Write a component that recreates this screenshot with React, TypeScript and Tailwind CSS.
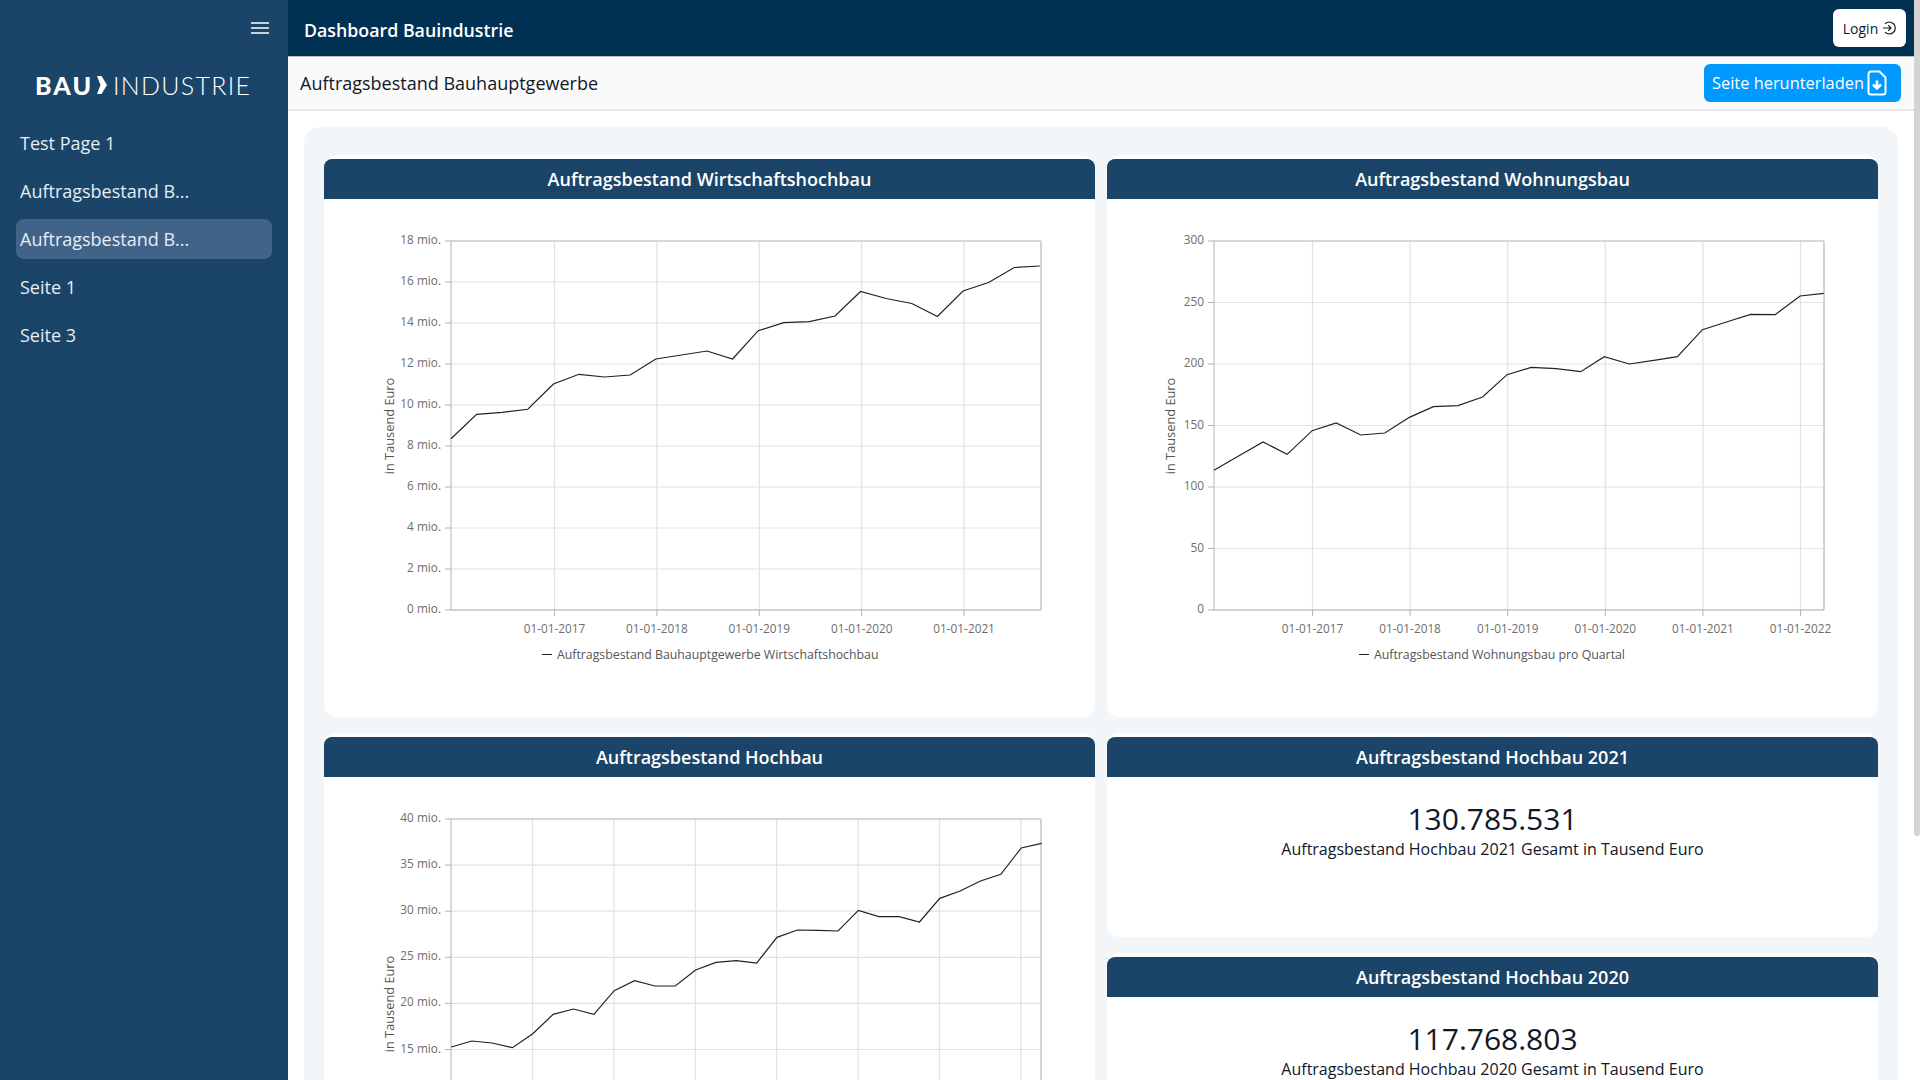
const font = "font-['Open_Sans',sans-serif]";

const chartOne = [
  438.7, 414.3, 412.3, 409.3, 384, 374.3, 377, 375, 359, 355, 351, 359, 330.7, 322.7, 321.7, 316, 291.5, 298.5, 303.5, 316.5, 291, 282.5, 267.5, 266,
];
const chartTwoX = [
  178, 230, 282, 333, 386, 437, 489, 540, 592, 643, 695, 747, 799, 850, 903, 955, 1005, 1058, 1110, 1160, 1213, 1264, 1315, 1367, 1420, 1470,
];
const chartTwoY = [
  781, 738, 696, 733, 662, 639, 675, 669, 622, 590, 587, 561, 494, 472, 476, 485, 440, 462, 451, 440, 359, 336, 313, 314, 258, 250,
];
const chartThree = [
  951, 933, 939, 953, 911, 853, 837, 853, 782, 752, 768, 768, 720, 697, 692, 699, 622, 600, 601, 603, 541, 560, 560, 576, 505, 483, 453, 433, 354, 340,
];

type Tick = { label: string; at: number };

type ChartProps = {
  viewBox: string;
  left: number;
  right: number;
  top: number;
  bottom: number;
  yTicks: Tick[];
  xTicks: Tick[];
  points: string;
  axisX: number;
  axisY: number;
  legend?: string;
  legendX?: number;
  showLabels?: boolean;
};

function LineChart({ viewBox, left, right, top, bottom, yTicks, xTicks, points, axisX, axisY, legend, legendX, showLabels }: ChartProps) {
  return (
    <svg viewBox={viewBox} className={`block w-full h-full ${font}`}>
      {yTicks.map((t) => (
        <g key={t.label}>
          <line x1={left} x2={right} y1={t.at} y2={t.at} stroke="#e2e2e2" strokeWidth="1.2" />
          <line x1={left - 6} x2={left} y1={t.at} y2={t.at} stroke="#b3b3b3" />
          <text x={left - 10} y={t.at + 3} textAnchor="end" fontSize="11.8" fill="#6e6e6e">
            {t.label}
          </text>
        </g>
      ))}
      {xTicks.map((t) => (
        <g key={t.at}>
          <line x1={t.at} x2={t.at} y1={top} y2={bottom} stroke="#e2e2e2" strokeWidth="1.2" />
          <line x1={t.at} x2={t.at} y1={bottom} y2={bottom + 6} stroke="#b3b3b3" />
          {showLabels && (
            <text x={t.at} y={bottom + 23} textAnchor="middle" fontSize="11.8" fill="#6e6e6e">
              {t.label}
            </text>
          )}
        </g>
      ))}
      <line x1={left} x2={right} y1={top} y2={top} stroke="#c0c0c0" />
      <line x1={right} x2={right} y1={top} y2={bottom} stroke="#d4d4d4" strokeWidth="2" />
      <line x1={left} x2={left} y1={top} y2={bottom} stroke="#b3b3b3" />
      <line x1={left} x2={right} y1={bottom} y2={bottom} stroke="#b3b3b3" />
      <polyline points={points} fill="none" stroke="#222222" strokeWidth="1.2" />
      <text
        x={axisX}
        y={axisY}
        transform={`rotate(-90 ${axisX} ${axisY})`}
        textAnchor="middle"
        fontSize="12.8"
        fill="#555555"
      >
        in Tausend Euro
      </text>
      {legend && (
        <g>
          <line x1={legendX} x2={(legendX ?? 0) + 10} y1={654.5} y2={654.5} stroke="#222222" />
          <text x={(legendX ?? 0) + 15} y={659} fontSize="12.3" fill="#555555">
            {legend}
          </text>
        </g>
      )}
    </svg>
  );
}

function Card({ title, className, children }: { title: string; className: string; children: React.ReactNode }) {
  return (
    <section className={`bg-white rounded-xl pt-1 flex flex-col ${className}`}>
      <h2 className="h-10 shrink-0 rounded-t-lg bg-[#1a4568] text-white text-[18px] font-semibold flex items-center justify-center">
        {title}
      </h2>
      {children}
    </section>
  );
}

function KpiCard({ title, value, caption }: { title: string; value: string; caption: string }) {
  return (
    <Card title={title} className="h-[204px] shrink-0">
      <div className="pt-6 text-center text-[#111827]">
        <p className="text-[30px] leading-[36px]">{value}</p>
        <p className="text-[16px] leading-[22px] mt-[1px]">{caption}</p>
      </div>
    </Card>
  );
}

function NavItem({ label, active }: { label: string; active?: boolean }) {
  return (
    <a
      className={`h-10 mx-4 px-1 flex items-center rounded-lg text-[18px] text-[#e6edf3] ${active ? "bg-[#426388]" : ""}`}
    >
      {label}
    </a>
  );
}

function Logo() {
  return (
    <div className="h-[28px] flex items-center text-white font-['Lato',sans-serif] text-[25px] leading-none ml-[35px]">
      <span className="font-black tracking-[2px]">BAU</span>
      <svg width="10" height="18" viewBox="0 0 10 18" className="ml-[4px] mr-[6px]">
        <path d="M0 0H4.5L10 9L4.5 18H0L3.5 9Z" fill="white" />
      </svg>
      <span className="font-light tracking-[1.3px]">INDUSTRIE</span>
    </div>
  );
}

export default function App() {
  const xOne = chartOne.map((y, i) => `${451 + i * 25.6},${y}`).join(" ");
  const xTwo = chartTwoY.map((y, i) => `${1130 + chartTwoX[i] / 2.119},${210 + y / 3}`).join(" ");
  const xThree = chartThree.map((y, i) => `${451.4 + i * 20.35},${730 + y / 3}`).join(" ");

  return (
    <div className={`h-screen overflow-hidden flex bg-white text-[#111827] ${font}`}>
      <aside className="w-[288px] shrink-0 bg-[#1a4568] flex flex-col">
        <div className="h-14 flex items-center justify-end pr-[19px]">
          <svg width="18" height="12" viewBox="0 0 18 12" stroke="white" strokeWidth="1.4" className="mb-[1px]">
            <path d="M0 1H18M0 6H18M0 11H18" />
          </svg>
        </div>
        <div className="mt-[15px] mb-6">
          <Logo />
        </div>
        <nav className="flex flex-col gap-2">
          <NavItem label="Test Page 1" />
          <NavItem label="Auftragsbestand B..." />
          <NavItem label="Auftragsbestand B..." active />
          <NavItem label="Seite 1" />
          <NavItem label="Seite 3" />
        </nav>
      </aside>

      <div className="flex-1 min-w-0 relative pr-[6px]">
        <header className="h-[57px] bg-[#003153] border-b border-[#b8c0cc] flex items-center justify-between pl-4 pr-2">
          <h1 className="text-white text-[17.8px] font-semibold pt-1">Dashboard Bauindustrie</h1>
          <button className="h-[38px] w-[73px] rounded-md bg-white text-[14px] font-medium flex items-center justify-center gap-1" type="button">
            Login
            <svg width="14" height="14" viewBox="0 0 14 14" fill="none" stroke="#111827" strokeWidth="1.2">
              <path d="M3 2.8A6 6 0 1 1 3 11.2" />
              <path d="M1 7H9M6.2 4.2L9 7L6.2 9.8" />
            </svg>
          </button>
        </header>
        <div className="h-[54px] bg-[#fafafa] border-b-2 border-[#e5e5ea] flex items-center justify-between pl-3 pr-[13px]">
          <h2 className="text-[18px] text-[#111827] pt-[1px]">Auftragsbestand Bauhauptgewerbe</h2>
          <button className="h-[38px] w-[197px] rounded-md bg-[#0099ff] text-white text-[16.4px] font-medium flex items-center pl-2 gap-[3px]" type="button">
            Seite herunterladen
            <svg width="20" height="26" viewBox="0 0 20 26" fill="none" stroke="white" strokeWidth="2">
              <path d="M4 1.5H12.5L18.5 7.5V22A2.5 2.5 0 0 1 16 24.5H4A2.5 2.5 0 0 1 1.5 22V4A2.5 2.5 0 0 1 4 1.5Z" strokeLinejoin="round" />
              <path d="M10 10.5V18.5M6 14.5L10 18.5L14 14.5" strokeWidth="2.6" />
            </svg>
          </button>
        </div>

        <main className="mx-4 mt-[16px] rounded-2xl bg-[#f2f6f9] px-5 pt-7">
          <div className="grid grid-cols-[771px_771px] gap-x-3 gap-y-4 items-start">
            <Card title="Auftragsbestand Wirtschaftshochbau" className="h-[562px]">
              <div className="h-[518px]">
                <LineChart
                  viewBox="324 199 771 518"
                  left={451}
                  right={1041}
                  top={241}
                  bottom={610}
                  axisX={394}
                  axisY={426}
                  legend="Auftragsbestand Bauhauptgewerbe Wirtschaftshochbau"
                  legendX={542}
                  showLabels
                  points={xOne}
                  yTicks={["0", "2", "4", "6", "8", "10", "12", "14", "16", "18"].map((n, i) => ({
                    label: `${n} mio.`,
                    at: 610 - i * 41,
                  }))}
                  xTicks={["2017", "2018", "2019", "2020", "2021"].map((y, i) => ({
                    label: `01-01-${y}`,
                    at: 554.5 + i * 102.4,
                  }))}
                />
              </div>
            </Card>
            <Card title="Auftragsbestand Wohnungsbau" className="h-[562px]">
              <div className="h-[518px]">
                <LineChart
                  viewBox="1107 199 771 518"
                  left={1214}
                  right={1824}
                  top={241}
                  bottom={610}
                  axisX={1175}
                  axisY={426}
                  legend="Auftragsbestand Wohnungsbau pro Quartal"
                  legendX={1359}
                  showLabels
                  points={xTwo}
                  yTicks={["0", "50", "100", "150", "200", "250", "300"].map((n, i) => ({
                    label: n,
                    at: 610 - i * 61.5,
                  }))}
                  xTicks={["2017", "2018", "2019", "2020", "2021", "2022"].map((y, i) => ({
                    label: `01-01-${y}`,
                    at: 1312.5 + i * 97.6,
                  }))}
                />
              </div>
            </Card>
            <Card title="Auftragsbestand Hochbau" className="h-[562px]">
              <div className="h-[518px]">
                <LineChart
                  viewBox="324 777 771 518"
                  left={451}
                  right={1041}
                  top={819}
                  bottom={1188}
                  axisX={394}
                  axisY={1004}
                  points={xThree}
                  yTicks={["40", "35", "30", "25", "20", "15", "10", "5", "0"].map((n, i) => ({
                    label: `${n} mio.`,
                    at: 819 + i * 46.1,
                  }))}
                  xTicks={[0, 1, 2, 3, 4, 5, 6, 7].map((i) => ({
                    label: "",
                    at: 532.5 + i * 81.4,
                  }))}
                />
              </div>
            </Card>
            <div className="flex flex-col gap-4">
              <KpiCard
                title="Auftragsbestand Hochbau 2021"
                value="130.785.531"
                caption="Auftragsbestand Hochbau 2021 Gesamt in Tausend Euro"
              />
              <KpiCard
                title="Auftragsbestand Hochbau 2020"
                value="117.768.803"
                caption="Auftragsbestand Hochbau 2020 Gesamt in Tausend Euro"
              />
            </div>
          </div>
        </main>

        {/* scrollbar thumb */}
        <div className="absolute top-0 right-0 w-[6px] h-[836px] rounded-b bg-[#d4d4d4]" />
      </div>
    </div>
  );
}
